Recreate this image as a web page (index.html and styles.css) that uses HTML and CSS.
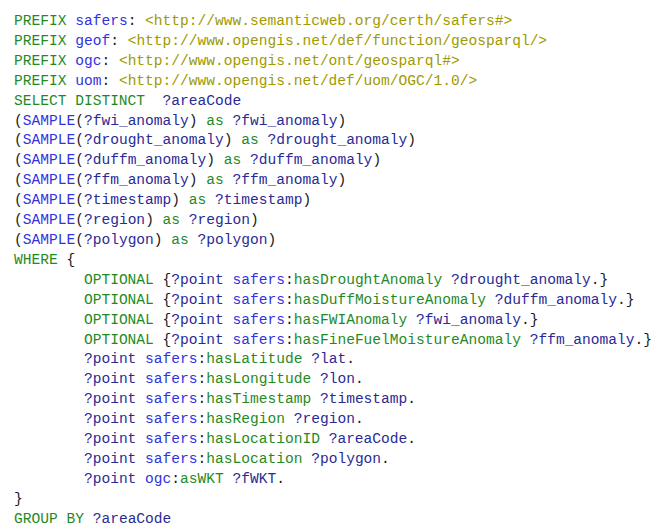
FILE: index.html
```html
<!DOCTYPE html>
<html>
<head>
<meta charset="utf-8">
<link rel="stylesheet" href="styles.css">
</head>
<body>
<pre class="code"><span class="kw">PREFIX</span> <span class="ns">safers</span>: <span class="uri">&lt;http://www.semanticweb.org/certh/safers#&gt;</span>
<span class="kw">PREFIX</span> <span class="ns">geof</span>: <span class="uri">&lt;http://www.opengis.net/def/function/geosparql/&gt;</span>
<span class="kw">PREFIX</span> <span class="ns">ogc</span>: <span class="uri">&lt;http://www.opengis.net/ont/geosparql#&gt;</span>
<span class="kw">PREFIX</span> <span class="ns">uom</span>: <span class="uri">&lt;http://www.opengis.net/def/uom/OGC/1.0/&gt;</span>
<span class="kw">SELECT DISTINCT</span>  <span class="var">?areaCode</span>
(<span class="ns">SAMPLE</span>(<span class="var">?fwi_anomaly</span>) <span class="kw">as</span> <span class="var">?fwi_anomaly</span>)
(<span class="ns">SAMPLE</span>(<span class="var">?drought_anomaly</span>) <span class="kw">as</span> <span class="var">?drought_anomaly</span>)
(<span class="ns">SAMPLE</span>(<span class="var">?duffm_anomaly</span>) <span class="kw">as</span> <span class="var">?duffm_anomaly</span>)
(<span class="ns">SAMPLE</span>(<span class="var">?ffm_anomaly</span>) <span class="kw">as</span> <span class="var">?ffm_anomaly</span>)
(<span class="ns">SAMPLE</span>(<span class="var">?timestamp</span>) <span class="kw">as</span> <span class="var">?timestamp</span>)
(<span class="ns">SAMPLE</span>(<span class="var">?region</span>) <span class="kw">as</span> <span class="var">?region</span>)
(<span class="ns">SAMPLE</span>(<span class="var">?polygon</span>) <span class="kw">as</span> <span class="var">?polygon</span>)
<span class="kw">WHERE</span> {
        <span class="kw">OPTIONAL</span> {<span class="var">?point</span> <span class="ns">safers</span>:<span class="kw">hasDroughtAnomaly</span> <span class="var">?drought_anomaly</span>.}
        <span class="kw">OPTIONAL</span> {<span class="var">?point</span> <span class="ns">safers</span>:<span class="kw">hasDuffMoistureAnomaly</span> <span class="var">?duffm_anomaly</span>.}
        <span class="kw">OPTIONAL</span> {<span class="var">?point</span> <span class="ns">safers</span>:<span class="kw">hasFWIAnomaly</span> <span class="var">?fwi_anomaly</span>.}
        <span class="kw">OPTIONAL</span> {<span class="var">?point</span> <span class="ns">safers</span>:<span class="kw">hasFineFuelMoistureAnomaly</span> <span class="var">?ffm_anomaly</span>.}
        <span class="var">?point</span> <span class="ns">safers</span>:<span class="kw">hasLatitude</span> <span class="var">?lat</span>.
        <span class="var">?point</span> <span class="ns">safers</span>:<span class="kw">hasLongitude</span> <span class="var">?lon</span>.
        <span class="var">?point</span> <span class="ns">safers</span>:<span class="kw">hasTimestamp</span> <span class="var">?timestamp</span>.
        <span class="var">?point</span> <span class="ns">safers</span>:<span class="kw">hasRegion</span> <span class="var">?region</span>.
        <span class="var">?point</span> <span class="ns">safers</span>:<span class="kw">hasLocationID</span> <span class="var">?areaCode</span>.
        <span class="var">?point</span> <span class="ns">safers</span>:<span class="kw">hasLocation</span> <span class="var">?polygon</span>.
        <span class="var">?point</span> <span class="ns">ogc</span>:<span class="kw">asWKT</span> <span class="var">?fWKT</span>.
}
<span class="kw">GROUP BY</span> <span class="var">?areaCode</span></pre>
</body>
</html>
```

FILE: styles.css
```css
html, body {
  margin: 0;
  padding: 0;
  background: #ffffff;
}

.code {
  margin: 0;
  padding: 12px 0 0 14px;
  font-family: "Liberation Mono", "DejaVu Sans Mono", monospace;
  font-size: 14.57px;
  line-height: 19.9px;
  color: #1a1a1a;
  white-space: pre;
}

.kw { color: #1f8a1f; }
.ns { color: #3232e0; }
.var { color: #2a2a96; }
.uri { color: #a09a00; }
```
